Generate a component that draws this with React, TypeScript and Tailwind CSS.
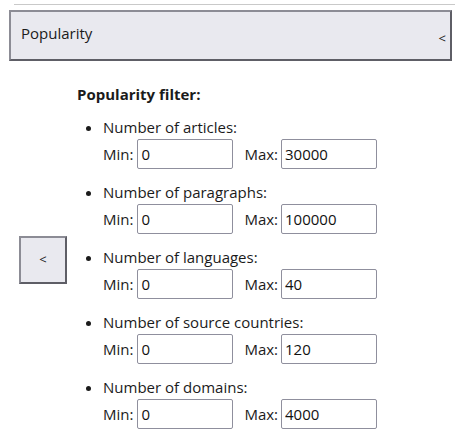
import React from 'react';

type Range = { label: string; min: string; max: string };

const ranges: Range[] = [
  { label: 'Number of articles:', min: '0', max: '30000' },
  { label: 'Number of paragraphs:', min: '0', max: '100000' },
  { label: 'Number of languages:', min: '0', max: '40' },
  { label: 'Number of source countries:', min: '0', max: '120' },
  { label: 'Number of domains:', min: '0', max: '4000' },
];

const inputCls =
  'w-[96px] h-[30px] px-[3px] border border-[#8f8f9d] rounded-[2px] bg-white text-[15px] text-[#111] outline-none';

const App: React.FC = () => {
  return (
    <div
      className="w-[461px] h-[442px] bg-white text-[#1b1b1b] text-[15px] overflow-hidden"
      style={{ fontFamily: '"Open Sans", "Noto Sans", sans-serif' }}
    >
      <div className="pt-[4px] px-[14px]">
        <div className="h-[1px] bg-[#c9c9c9] mr-[-8px]" />
      </div>

      <div className="mx-[9px] mt-[5px] h-[51px] flex items-start justify-between pt-[11px] pl-[10px] pr-[4px] bg-[#e9e9ef] border-2 border-[#8c8c95] border-r-[#5e5e66] border-b-[#5e5e66]">
        <span className="leading-[20px]">Popularity</span>
        <span className="text-[13px] leading-[12px] mt-[9px]">&lt;</span>
      </div>

      <div className="flex items-start">
        <div className="pl-[19px] pr-[10px] pt-[175px]">
          <button className="w-[48px] h-[48px] flex items-center justify-center bg-[#e9e9ef] border-2 border-[#8c8c95] border-r-[#5e5e66] border-b-[#5e5e66] text-[13px]">
            &lt;
          </button>
        </div>

        <div className="pt-[21px]">
          <div className="font-bold leading-[24px]">Popularity filter:</div>
          <ul className="mt-[9px] pl-[26px] list-disc marker:text-[#1b1b1b]">
            {ranges.map((r) => (
              <li key={r.label} className="mb-[11px]">
                <div className="leading-[24px]">{r.label}</div>
                <div className="flex items-center">
                  <span className="mr-[4px]">Min:</span>
                  <input className={inputCls} defaultValue={r.min} />
                  <span className="ml-[11px] mr-[3px]">Max:</span>
                  <input className={inputCls} defaultValue={r.max} />
                </div>
              </li>
            ))}
          </ul>
        </div>
      </div>
    </div>
  );
};

export default App;
